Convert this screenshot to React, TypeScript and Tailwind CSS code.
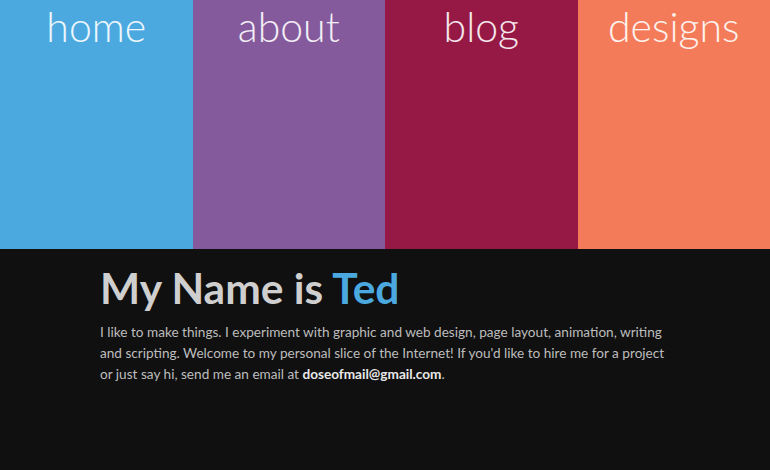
import React from "react";

const nav = [
  { label: "home", bg: "bg-[#4ba9e0]" },
  { label: "about", bg: "bg-[#845a9c]" },
  { label: "blog", bg: "bg-[#951845]" },
  { label: "designs", bg: "bg-[#f47b59]" },
];

export default function App() {
  return (
    <div className="w-[770px] h-[470px] bg-[#101010] overflow-hidden" style={{ fontFamily: "Lato, 'Open Sans', sans-serif" }}>
      <nav className="grid grid-cols-4 h-[249px]">
        {nav.map((n) => (
          <a key={n.label} className={`${n.bg} flex justify-center pt-[7px] text-[41px] leading-[40px] font-light text-white/90`}>
            {n.label}
          </a>
        ))}
      </nav>
      <section className="pl-[100px] pr-[90px] pt-[14px]">
        <h1 className="text-[42.5px] leading-[50px] font-bold text-[#cfcfcf]">
          My Name is <span className="text-[#4ba9e0]">Ted</span>
        </h1>
        <p className="mt-[9px] w-[572px] text-[13.6px] leading-[21px] text-[#bdbdbd]">
          I like to make things. I experiment with graphic and web design, page layout, animation, writing and scripting. Welcome to my personal slice of the Internet! If you'd like to hire me for a project or just say hi, send me an email at <span className="font-bold text-[#e8e8e8]">doseofmail@gmail.com</span>.
        </p>
      </section>
    </div>
  );
}
